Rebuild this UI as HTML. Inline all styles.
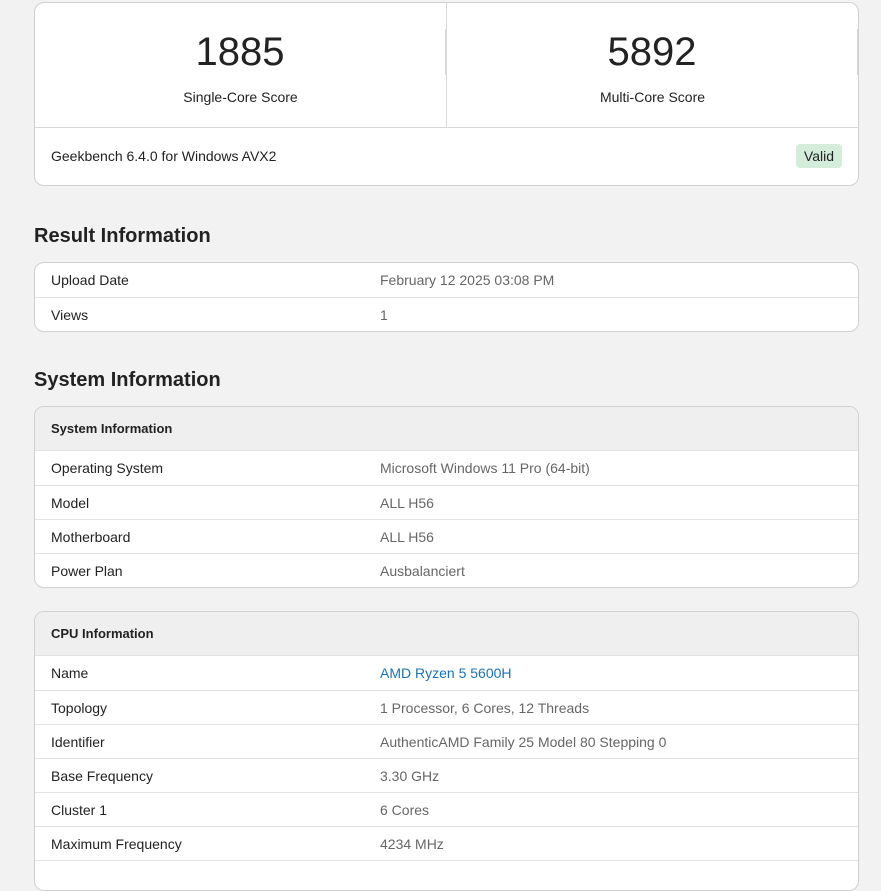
<!DOCTYPE html>
<html><head><style>
*{box-sizing:border-box;margin:0;padding:0}
body{width:881px;height:859px;overflow:hidden;background:#f2f2f2;font-family:"Liberation Sans",sans-serif;color:#222;font-size:14px;position:relative}
.card{position:absolute;left:34px;width:825px;background:#fff;border:1px solid #d0d0d0;border-radius:10px;overflow:hidden}
.score{display:flex;height:125px;border-bottom:1px solid #d8d8d8}
.score div{flex:1;text-align:center}
.score div:first-child{border-right:1px solid #d8d8d8}
.num{font-size:40px;margin-top:26px;line-height:46px;color:#222}
.lbl{font-size:14px;margin-top:14px}
h2{position:absolute;left:34px;font-size:20px;font-weight:bold;color:#222}
.row{height:34px;border-top:1px solid #e2e2e2;display:flex;align-items:center}
.row:first-child{border-top:none}
.row .k{width:345px;padding-left:16px}
.row .v{color:#666}
.hd{height:44px;background:#efefef;font-weight:bold;font-size:13px;padding-left:16px;display:flex;align-items:center;border-bottom:1px solid #e2e2e2}
.hd+.row{border-top:none}
a{color:#1a73b8;text-decoration:none}
</style></head><body>
<div class="card" style="top:2px;height:184px">
<div class="score"><div><div class="num">1885</div><div class="lbl">Single-Core Score</div></div><div><div class="num">5892</div><div class="lbl">Multi-Core Score</div></div></div>
<div style="padding:20px 16px;position:relative">Geekbench 6.4.0 for Windows AVX2
<span style="position:absolute;right:16px;top:16px;background:#d4eddb;border-radius:4px;padding:4px 8px;font-size:14px">Valid</span></div>
</div>
<h2 style="top:225px">Result Information</h2>
<div class="card" style="top:262px">
<div class="row"><div class="k">Upload Date</div><div class="v">February 12 2025 03:08 PM</div></div>
<div class="row"><div class="k">Views</div><div class="v">1</div></div>
</div>
<h2 style="top:369px">System Information</h2>
<div class="card" style="top:406px">
<div class="hd">System Information</div>
<div class="row"><div class="k">Operating System</div><div class="v">Microsoft Windows 11 Pro (64-bit)</div></div>
<div class="row"><div class="k">Model</div><div class="v">ALL H56</div></div>
<div class="row"><div class="k">Motherboard</div><div class="v">ALL H56</div></div>
<div class="row"><div class="k">Power Plan</div><div class="v">Ausbalanciert</div></div>
</div>
<div class="card" style="top:611px;height:280px">
<div class="hd">CPU Information</div>
<div class="row"><div class="k">Name</div><div class="v"><a>AMD Ryzen 5 5600H</a></div></div>
<div class="row"><div class="k">Topology</div><div class="v">1 Processor, 6 Cores, 12 Threads</div></div>
<div class="row"><div class="k">Identifier</div><div class="v">AuthenticAMD Family 25 Model 80 Stepping 0</div></div>
<div class="row"><div class="k">Base Frequency</div><div class="v">3.30 GHz</div></div>
<div class="row"><div class="k">Cluster 1</div><div class="v">6 Cores</div></div>
<div class="row"><div class="k">Maximum Frequency</div><div class="v">4234 MHz</div></div>
<div class="row"><div class="k"></div><div class="v"></div></div>
</div>
</body></html>
